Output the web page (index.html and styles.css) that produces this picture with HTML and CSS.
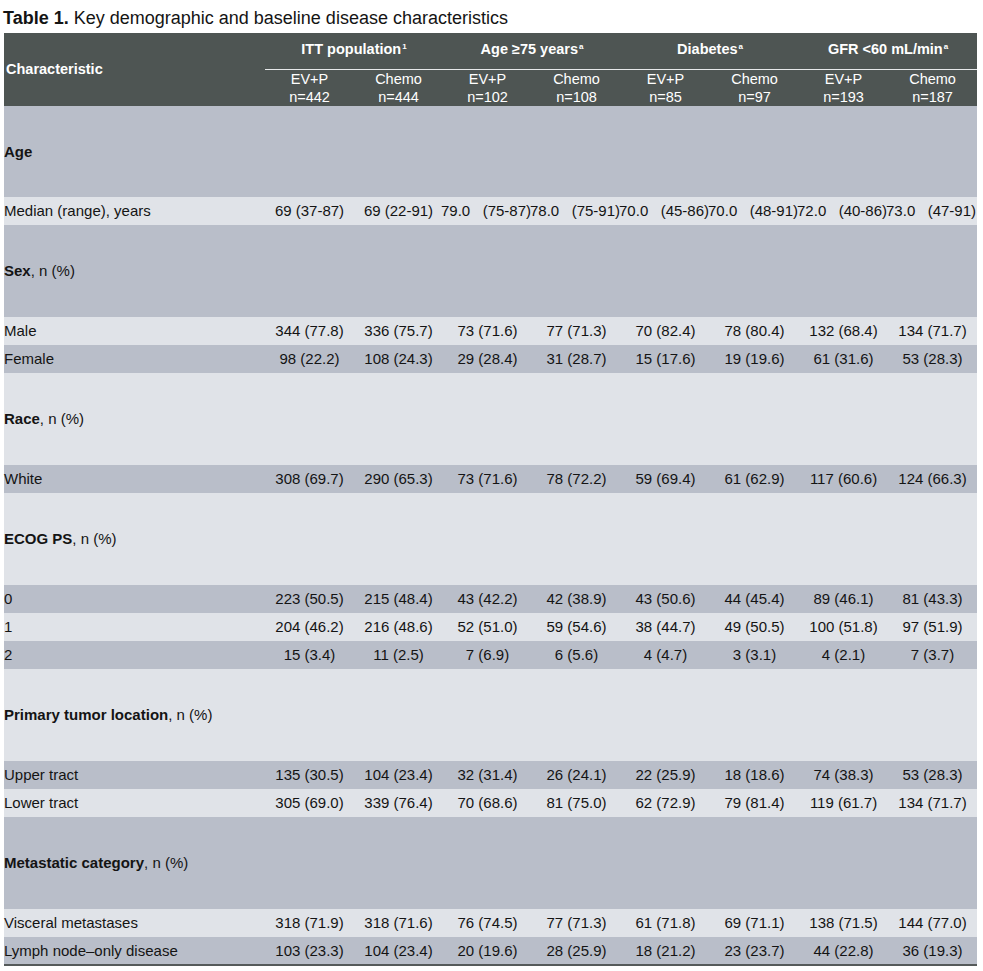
FILE: index.html
```html
<!DOCTYPE html>
<html lang="en">
<head>
<meta charset="utf-8">
<title>Table 1</title>
<link rel="stylesheet" href="styles.css">
</head>
<body>
<div class="page">
  <h1 class="title"><b>Table 1.</b> Key demographic and baseline disease characteristics</h1>
  <table class="tbl">
    <colgroup>
      <col class="c-label">
      <col class="c-val"><col class="c-val"><col class="c-val"><col class="c-val">
      <col class="c-val"><col class="c-val"><col class="c-val"><col class="c-val">
    </colgroup>
    <thead>
      <tr class="hg">
        <th rowspan="2" class="h-char">Characteristic</th>
        <th colspan="2" class="h-grp">ITT population<sup>1</sup></th>
        <th colspan="2" class="h-grp">Age ≥75 years<sup>a</sup></th>
        <th colspan="2" class="h-grp">Diabetes<sup>a</sup></th>
        <th colspan="2" class="h-grp">GFR &lt;60 mL/min<sup>a</sup></th>
      </tr>
      <tr class="hs">
        <th>EV+P<br>n=442</th><th>Chemo<br>n=444</th>
        <th>EV+P<br>n=102</th><th>Chemo<br>n=108</th>
        <th>EV+P<br>n=85</th><th>Chemo<br>n=97</th>
        <th>EV+P<br>n=193</th><th>Chemo<br>n=187</th>
      </tr>
    </thead>
    <tbody>
      <tr class="grp first"><td><b>Age</b></td><td></td><td></td><td></td><td></td><td></td><td></td><td></td><td></td></tr>
      <tr class="data">
        <td>Median (range), years</td><td>69 (37-87)</td><td>69 (22-91)</td>
        <td class="split"><div class="sp"><span>79.0</span><span>(75-87)</span></div></td>
        <td class="split"><div class="sp"><span>78.0</span><span>(75-91)</span></div></td>
        <td class="split"><div class="sp"><span>70.0</span><span>(45-86)</span></div></td>
        <td class="split"><div class="sp"><span>70.0</span><span>(48-91)</span></div></td>
        <td class="split"><div class="sp"><span>72.0</span><span>(40-86)</span></div></td>
        <td class="split"><div class="sp"><span>73.0</span><span>(47-91)</span></div></td>
      </tr>
      <tr class="grp"><td><b>Sex</b>, n (%)</td><td></td><td></td><td></td><td></td><td></td><td></td><td></td><td></td></tr>
      <tr class="data"><td>Male</td><td>344 (77.8)</td><td>336 (75.7)</td><td>73 (71.6)</td><td>77 (71.3)</td><td>70 (82.4)</td><td>78 (80.4)</td><td>132 (68.4)</td><td>134 (71.7)</td></tr>
      <tr class="data"><td>Female</td><td>98 (22.2)</td><td>108 (24.3)</td><td>29 (28.4)</td><td>31 (28.7)</td><td>15 (17.6)</td><td>19 (19.6)</td><td>61 (31.6)</td><td>53 (28.3)</td></tr>
      <tr class="grp"><td><b>Race</b>, n (%)</td><td></td><td></td><td></td><td></td><td></td><td></td><td></td><td></td></tr>
      <tr class="data"><td>White</td><td>308 (69.7)</td><td>290 (65.3)</td><td>73 (71.6)</td><td>78 (72.2)</td><td>59 (69.4)</td><td>61 (62.9)</td><td>117 (60.6)</td><td>124 (66.3)</td></tr>
      <tr class="grp"><td><b>ECOG PS</b>, n (%)</td><td></td><td></td><td></td><td></td><td></td><td></td><td></td><td></td></tr>
      <tr class="data"><td>0</td><td>223 (50.5)</td><td>215 (48.4)</td><td>43 (42.2)</td><td>42 (38.9)</td><td>43 (50.6)</td><td>44 (45.4)</td><td>89 (46.1)</td><td>81 (43.3)</td></tr>
      <tr class="data"><td>1</td><td>204 (46.2)</td><td>216 (48.6)</td><td>52 (51.0)</td><td>59 (54.6)</td><td>38 (44.7)</td><td>49 (50.5)</td><td>100 (51.8)</td><td>97 (51.9)</td></tr>
      <tr class="data"><td>2</td><td>15 (3.4)</td><td>11 (2.5)</td><td>7 (6.9)</td><td>6 (5.6)</td><td>4 (4.7)</td><td>3 (3.1)</td><td>4 (2.1)</td><td>7 (3.7)</td></tr>
      <tr class="grp"><td><b>Primary tumor location</b>, n (%)</td><td></td><td></td><td></td><td></td><td></td><td></td><td></td><td></td></tr>
      <tr class="data"><td>Upper tract</td><td>135 (30.5)</td><td>104 (23.4)</td><td>32 (31.4)</td><td>26 (24.1)</td><td>22 (25.9)</td><td>18 (18.6)</td><td>74 (38.3)</td><td>53 (28.3)</td></tr>
      <tr class="data"><td>Lower tract</td><td>305 (69.0)</td><td>339 (76.4)</td><td>70 (68.6)</td><td>81 (75.0)</td><td>62 (72.9)</td><td>79 (81.4)</td><td>119 (61.7)</td><td>134 (71.7)</td></tr>
      <tr class="grp"><td><b>Metastatic category</b>, n (%)</td><td></td><td></td><td></td><td></td><td></td><td></td><td></td><td></td></tr>
      <tr class="data"><td>Visceral metastases</td><td>318 (71.9)</td><td>318 (71.6)</td><td>76 (74.5)</td><td>77 (71.3)</td><td>61 (71.8)</td><td>69 (71.1)</td><td>138 (71.5)</td><td>144 (77.0)</td></tr>
      <tr class="data"><td>Lymph node–only disease</td><td>103 (23.3)</td><td>104 (23.4)</td><td>20 (19.6)</td><td>28 (25.9)</td><td>18 (21.2)</td><td>23 (23.7)</td><td>44 (22.8)</td><td>36 (19.3)</td></tr>
    </tbody>
  </table>
</div>
</body>
</html>
```

FILE: styles.css
```css
body {
  margin: 0;
  background: #ffffff;
  color: #141414;
  font-family: "Liberation Sans", Arial, Helvetica, sans-serif;
}

.page {
  padding: 7px 6px 0 4px;
}

.title {
  margin: 0 0 4px -1px;
  font-size: 18px;
  font-weight: normal;
  line-height: 22px;
}

.title b {
  font-weight: bold;
}

.tbl {
  border-collapse: collapse;
  table-layout: fixed;
  width: 973px;
  font-size: 15px;
}

.c-label {
  width: 261px;
}

.c-val {
  width: 89px;
}

thead th {
  background: #4e5553;
  color: #ffffff;
  font-size: 14.5px;
  padding: 0;
  text-align: center;
  vertical-align: middle;
}

thead sup {
  font-size: 8px;
  vertical-align: 5px;
  line-height: 0;
  margin-left: 1px;
}

.hg th {
  height: 36px;
}

.hg .h-grp {
  border-bottom: 1px solid #e6e8ea;
  padding-bottom: 4px;
  box-sizing: border-box;
}

.hg .h-char {
  text-align: left;
  padding-left: 2px;
}

.hs th {
  font-weight: normal;
  line-height: 18px;
  height: 36px;
}

tbody td {
  padding: 0;
  text-align: center;
  white-space: nowrap;
  vertical-align: middle;
}

tbody td:first-child {
  text-align: left;
}

tbody tr:nth-child(odd) {
  background: #b9bec9;
}

tbody tr:nth-child(even) {
  background: #e0e3e8;
}

tr.grp {
  height: 92px;
}

tr.grp.first {
  height: 91px;
}

tr.data {
  height: 28px;
}

tbody tr:last-child td {
  border-bottom: 2px solid #555a5a;
}

.sp {
  display: flex;
  justify-content: space-between;
  margin: 0 1px 0 -2px;
}
```
